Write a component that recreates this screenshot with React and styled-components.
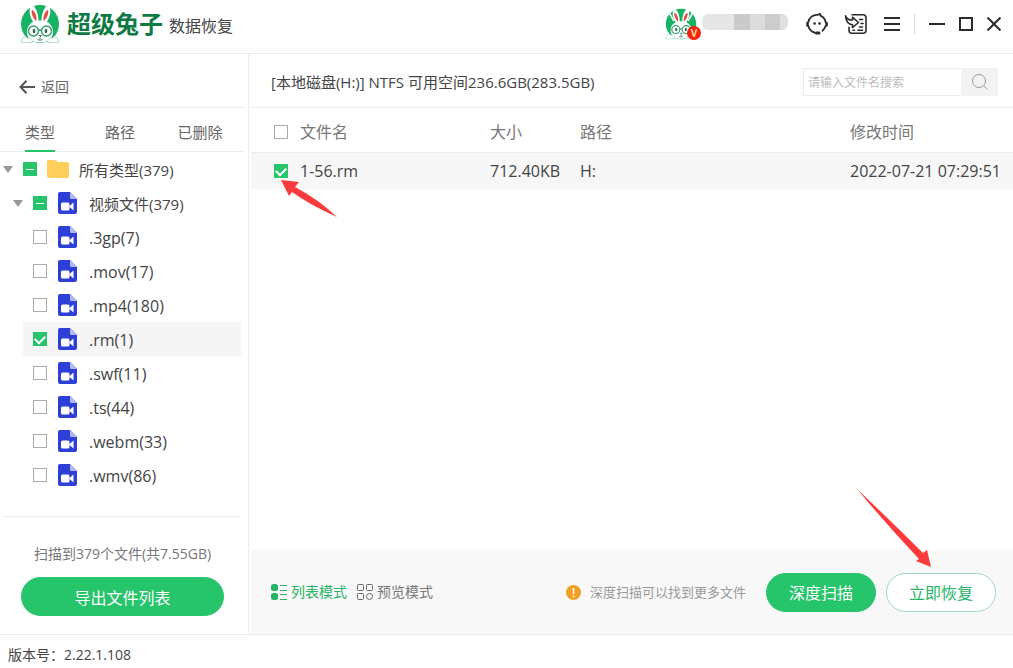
import React, { useEffect, useRef, useState } from "react";
import styled, { createGlobalStyle } from "styled-components";

const fileTypes = [
  { name: ".3gp", count: 7 },
  { name: ".mov", count: 17 },
  { name: ".mp4", count: 180 },
  { name: ".rm", count: 1 },
  { name: ".swf", count: 11 },
  { name: ".ts", count: 44 },
  { name: ".webm", count: 33 },
  { name: ".wmv", count: 86 },
];

const files = [
  {
    name: "1-56.rm",
    size: "712.40KB",
    path: "H:",
    date: "2022-07-21 07:29:51",
  },
];

const Rabbit = ({ size, crown }) => (
  <svg width={size} height={size} viewBox="0 0 40 40" aria-hidden="true">
    <circle cx="20" cy="20" r="19" fill="#16b364" />
    {crown && (
      <path
        d="M12 0l2 9M28 0l-2 9M6 7l5 9M34 7l-5 9"
        stroke="#fff"
        strokeWidth="2"
        fill="none"
      />
    )}
    <path
      d="M16 21C10 16 8 6 11 1.500C14 0 19 8 18.500 19zM24 21C30 16 32 6 29 1.500C26 0 21 8 21.500 19z"
      fill="#fff"
    />
    <path
      d="M16 17C12 13 11 8 12 6C15 7 17 12 16.500 17zM24 17C28 13 29 8 28 6C25 7 23 12 23.500 17z"
      fill="#d9534a"
    />
    <path
      d="M20 16.500C29 16.500 33 22 33 28C33 35 28 38.500 20 38.500S7 35 7 28C7 22 11 16.500 20 16.500z"
      fill="#fff"
    />
    <path
      d="M1.500 38.500C1 34 5 31.500 7.500 34C11 33 13 36 12 38.500zM38.500 38.500C39 34 35 31.500 32.500 34C29 33 27 36 28 38.500z"
      fill="#fff"
      stroke="#7cc9a2"
      strokeWidth="0.6"
    />
    <g fill="none" stroke="#2e9e6b" strokeWidth="1.4">
      <circle cx="13.500" cy="27" r="5" />
      <circle cx="26.500" cy="27" r="5" />
      <path d="M18.500 26.500q1.500-1 3 0" />
    </g>
    <ellipse cx="14" cy="27" rx="1.300" ry="2.200" fill="#256b50" />
    <ellipse cx="26" cy="27" rx="1.300" ry="2.200" fill="#256b50" />
    <path
      d="M18.500 31.500h3l-1.500 1.500v2.500M17.500 35.500q2.500 1.500 5 0"
      fill="none"
      stroke="#33705a"
      strokeWidth="0.9"
    />
  </svg>
);

const ServiceIcon = () => (
  <svg
    width="22"
    height="22"
    viewBox="0 0 22 22"
    fill="none"
    stroke="#2b2b2b"
    strokeWidth="1.800"
    strokeLinecap="round"
    aria-hidden="true"
  >
    <path d="M2.300 9C3.200 4.500 7 1.500 11.500 1.800L14 .9L14.500 2.600C17.300 3.800 19 6 19.600 9" />
    <path d="M2.300 13C3.200 16.500 6 19.300 10 20M19.300 13.500C18.800 15.300 17.800 16.700 16.500 17.700" />
    <path d="M1.500 10v2.500M20.500 10v2.500" strokeWidth="2.600" />
    <path d="M10.500 20h2.500" strokeWidth="3" />
    <path d="M8.500 10.500h.1M13.500 10.500h.1" strokeWidth="2.600" />
  </svg>
);

const FeedbackIcon = () => (
  <svg
    width="24"
    height="24"
    viewBox="0 0 24 24"
    fill="none"
    stroke="#2b2b2b"
    strokeWidth="1.600"
    strokeLinejoin="round"
    strokeLinecap="round"
    aria-hidden="true"
  >
    <path d="M8 2.800h11a3 3 0 0 1 3 3v12.500a3 3 0 0 1-3 3H8a3 3 0 0 1-3-3v-3" />
    <path d="M1.500 3.800C3 7 5 8.300 8.500 8V5.200L14.500 10.500L8.500 15.500v-2.800C4.500 12.500 2 9.500 1.500 3.800z" />
    <path d="M15.500 7.500h3M17 11.500h2M15.500 15h3M9 18.300h1.500M14 18.300h4.500" />
  </svg>
);

const FolderIcon = () => (
  <svg width="22" height="20" viewBox="0 0 22 20" aria-hidden="true">
    <path
      d="M1.500 1h6.500a1.500 1.500 0 0 1 1.200.6L10.500 3h9.500a2 2 0 0 1 2 2v12a2 2 0 0 1-2 2H2a2 2 0 0 1-2-2V2.500A1.500 1.500 0 0 1 1.500 1z"
      fill="#ffce5b"
    />
  </svg>
);

const VideoIcon = () => (
  <svg width="20" height="22" viewBox="0 0 20 22" aria-hidden="true">
    <path
      d="M2 0h10l7 7v13a2 2 0 0 1-2 2H2a2 2 0 0 1-2-2V2a2 2 0 0 1 2-2z"
      fill="#2d3fd6"
    />
    <path d="M12 0l7 7h-5.500A1.500 1.500 0 0 1 12 5.500z" fill="#b4bbf3" />
    <rect x="3" y="10.500" width="8.500" height="8" rx="1.500" fill="#fff" />
    <path d="M11 14.500l4.500-4v8z" fill="#fff" />
  </svg>
);

const ListIcon = () => (
  <svg width="16" height="16" viewBox="0 0 16 16" aria-hidden="true">
    <rect x="0" y="0" width="7" height="7" rx="2.500" fill="#26b565" />
    <rect x="0" y="9" width="7" height="7" rx="2.500" fill="#26b565" />
    <path d="M9 1.500h7M9 6.500h7M9 10.500h7M9 15.500h7" stroke="#26b565" />
  </svg>
);

const GridIcon = () => (
  <svg
    width="16"
    height="16"
    viewBox="0 0 16 16"
    fill="none"
    stroke="#666"
    aria-hidden="true"
  >
    <rect x="0.500" y="0.500" width="6" height="6" rx="1" />
    <rect x="9.500" y="0.500" width="6" height="6" rx="1" />
    <rect x="0.500" y="9.500" width="6" height="6" rx="1" />
    <circle cx="12.500" cy="12.500" r="3" />
  </svg>
);

const CheckBox = ({ partial, ...props }) => {
  const ref = useRef(null);
  useEffect(() => {
    ref.current.indeterminate = !!partial;
  }, [partial]);
  return <Check ref={ref} type="checkbox" {...props} />;
};

const App = () => {
  const [checked, setChecked] = useState({ ".rm": true });
  const [picked, setPicked] = useState({ "1-56.rm": true });

  return (
    <Window>
      <GlobalStyle />
      <Header>
        <Rabbit size={40} />
        <Brand>超级兔子</Brand>
        <Product>数据恢复</Product>
        <Spacer />
        <Avatar>
          <Rabbit size={32} crown />
          <Vip>V</Vip>
        </Avatar>
        <UserName>
          <Block $color="#e6e6e6" $width={32} />
          <Block $color="#cacaca" $width={16} />
          <Block $color="#dcdcdc" $width={15} />
          <Block $color="#cccccc" $width={15} />
          <Block $color="#e0e0e0" $width={8} />
        </UserName>
        <Tools>
          <IconButton aria-label="客服">
            <ServiceIcon />
          </IconButton>
          <IconButton aria-label="反馈">
            <FeedbackIcon />
          </IconButton>
          <IconButton aria-label="菜单">
            <svg width="16" height="16" viewBox="0 0 16 16">
              <path
                d="M0 2h16M0 8h16M0 14h16"
                stroke="#2b2b2b"
                strokeWidth="2"
              />
            </svg>
          </IconButton>
        </Tools>
        <WindowButtons>
          <IconButton aria-label="最小化">
            <svg width="16" height="16" viewBox="0 0 16 16">
              <path d="M0 8h16" stroke="#2b2b2b" strokeWidth="2" />
            </svg>
          </IconButton>
          <IconButton aria-label="最大化">
            <svg width="14" height="14" viewBox="0 0 14 14">
              <path
                d="M1 1h12v12H1z"
                fill="none"
                stroke="#2b2b2b"
                strokeWidth="2"
              />
            </svg>
          </IconButton>
          <IconButton aria-label="关闭">
            <svg width="14" height="14" viewBox="0 0 14 14">
              <path
                d="M.5 .5l13 13M13.500 .5l-13 13"
                stroke="#2b2b2b"
                strokeWidth="2"
              />
            </svg>
          </IconButton>
        </WindowButtons>
      </Header>

      <Body>
        <Sidebar>
          <Back>
            <svg width="16" height="14" viewBox="0 0 16 14" aria-hidden="true">
              <path
                d="M7.500 .8L1.500 7l6 6.200M1.500 7H16"
                fill="none"
                stroke="#555"
                strokeWidth="2"
              />
            </svg>
            返回
          </Back>
          <Tabs>
            <Tab $active>类型</Tab>
            <Tab>路径</Tab>
            <Tab>已删除</Tab>
          </Tabs>
          <Tree>
            <TreeRow $level={0}>
              <Caret />
              <CheckBox partial />
              <FolderIcon />
              <TreeText>所有类型(379)</TreeText>
            </TreeRow>
            <TreeRow $level={1}>
              <Caret />
              <CheckBox partial />
              <VideoIcon />
              <TreeText>视频文件(379)</TreeText>
            </TreeRow>
            {fileTypes.map(({ name, count }) => (
              <TreeRow key={name} $level={2} $active={name === ".rm"}>
                <CheckBox
                  checked={!!checked[name]}
                  onChange={(e) =>
                    setChecked({ ...checked, [name]: e.target.checked })
                  }
                />
                <VideoIcon />
                <TreeText $leaf>
                  {name}({count})
                </TreeText>
              </TreeRow>
            ))}
          </Tree>
          <Summary>
            <Found>扫描到379个文件(共7.55GB)</Found>
            <Button $primary>导出文件列表</Button>
          </Summary>
        </Sidebar>

        <Main>
          <InfoBar>
            <Disk>[本地磁盘(H:)] NTFS 可用空间236.6GB(283.5GB)</Disk>
            <Search>
              <SearchInput
                aria-label="搜索文件名"
                placeholder="请输入文件名搜索"
              />
              <SearchButton aria-label="搜索">
                <svg width="18" height="18" viewBox="0 0 18 18">
                  <g fill="none" stroke="#999">
                    <circle cx="8" cy="8" r="6.500" />
                    <path d="M13 13l3.500 3.500" />
                  </g>
                </svg>
              </SearchButton>
            </Search>
          </InfoBar>
          <Table>
            <thead>
              <tr>
                <HeadCell $width={49}>
                  <CheckBox aria-label="全选" />
                </HeadCell>
                <HeadCell $width={190}>文件名</HeadCell>
                <HeadCell $width={90}>大小</HeadCell>
                <HeadCell>路径</HeadCell>
                <HeadCell $width={163}>修改时间</HeadCell>
              </tr>
            </thead>
            <tbody>
              {files.map((file) => (
                <tr key={file.name}>
                  <Cell>
                    <Pointed>
                      <CheckBox
                        aria-label={file.name}
                        checked={!!picked[file.name]}
                        onChange={(e) =>
                          setPicked({
                            ...picked,
                            [file.name]: e.target.checked,
                          })
                        }
                      />
                      <RowArrow viewBox="0 0 58 40" aria-hidden="true">
                        <path d="M1 1L19 3L15 8Q38 20 57 38Q30 26 12 13L9 17z" />
                      </RowArrow>
                    </Pointed>
                  </Cell>
                  <Cell>{file.name}</Cell>
                  <Cell>{file.size}</Cell>
                  <Cell>{file.path}</Cell>
                  <Cell>{file.date}</Cell>
                </tr>
              ))}
            </tbody>
          </Table>
          <ActionBar>
            <ModeButton $active>
              <ListIcon />
              列表模式
            </ModeButton>
            <ModeButton>
              <GridIcon />
              预览模式
            </ModeButton>
            <Spacer />
            <Hint>
              <svg
                width="15"
                height="15"
                viewBox="0 0 15 15"
                aria-hidden="true"
              >
                <circle cx="7.500" cy="7.500" r="7.500" fill="#f0a020" />
                <path
                  d="M7.500 3v6M7.500 10.500v1.700"
                  stroke="#fff"
                  strokeWidth="1.600"
                />
              </svg>
              深度扫描可以找到更多文件
            </Hint>
            <Actions>
              <Button $primary>深度扫描</Button>
              <Pointed>
                <Button>立即恢复</Button>
                <ButtonArrow viewBox="0 0 78 82" aria-hidden="true">
                  <path d="M1 1Q38 36 67 65L71 62L75 79L60 73L63 71Q30 36 1 1z" />
                </ButtonArrow>
              </Pointed>
            </Actions>
          </ActionBar>
        </Main>
      </Body>

      <Footer>版本号：2.22.1.108</Footer>
    </Window>
  );
};

export default App;

const GlobalStyle = createGlobalStyle`
  * {
    box-sizing: border-box;
  }
  body {
    margin: 0;
    background: #fff;
    color: #444;
    font-family: "Open Sans", "Noto Sans CJK SC", sans-serif;
    font-size: 15px;
    line-height: 20px;
  }
  button, input {
    font: inherit;
  }
  button {
    padding: 0;
    border: 0;
    background: none;
    cursor: pointer;
  }
  svg {
    display: block;
    flex-shrink: 0;
  }
`;

const Window = styled.div`
  display: flex;
  flex-direction: column;
  min-height: 100vh;
`;

const Header = styled.header`
  display: flex;
  align-items: center;
  height: 54px;
  padding: 0 12px 6px 20px;
  border-bottom: 1px solid #ececec;
`;

const Brand = styled.strong`
  margin-left: 7px;
  color: #0d7a43;
  font-size: 24px;
  font-weight: 700;
`;

const Product = styled.span`
  margin-left: 6px;
  padding-top: 4px;
  font-size: 16px;
`;

const Spacer = styled.div`
  flex: 1;
`;

const Avatar = styled.div`
  position: relative;
`;

const Vip = styled.span`
  position: absolute;
  right: -4px;
  bottom: 0;
  width: 14px;
  height: 14px;
  border-radius: 50%;
  background: #f5230f;
  color: #ffd9a0;
  font-size: 10px;
  font-weight: 700;
  line-height: 14px;
  text-align: center;
`;

const UserName = styled.div`
  display: flex;
  margin-left: 5px;
  padding-bottom: 4px;
`;

const Block = styled.span`
  width: ${(props) => props.$width}px;
  height: 16px;
  background: ${(props) => props.$color};

  &:first-child {
    border-radius: 6px 0 0 6px;
  }
  &:last-child {
    border-radius: 0 6px 6px 0;
  }
`;

const IconButton = styled.button`
  display: flex;
  align-items: center;
`;

const Tools = styled.div`
  display: flex;
  align-items: center;
  gap: 16px;
  height: 20px;
  margin-left: 18px;
  padding-right: 14px;
  border-right: 1px solid #ddd;
`;

const WindowButtons = styled.div`
  display: flex;
  gap: 14px;
  margin-left: 14px;
`;

const Body = styled.div`
  display: flex;
  flex: 1;
`;

const Sidebar = styled.aside`
  display: flex;
  flex-direction: column;
  width: 249px;
  flex-shrink: 0;
  padding-right: 4px;
  border-right: 1px solid #ececec;
`;

const Back = styled.button`
  display: flex;
  align-items: center;
  gap: 6px;
  height: 54px;
  padding: 12px 0 0 19px;
  border-bottom: 1px solid #ececec;
  color: #666;
  font-size: 14px;
`;

const Tabs = styled.nav`
  display: grid;
  grid-template-columns: repeat(3, 80px);
  justify-items: center;
  height: 44px;
  border-bottom: 1px solid #ececec;
`;

const Tab = styled.button`
  height: 44px;
  padding-top: 6px;
  border-bottom: 2px solid ${(props) => (props.$active ? "#26c46b" : "transparent")};
  color: #666;
  white-space: nowrap;
`;

const Tree = styled.div`
  display: flex;
  flex-direction: column;
`;

const TreeRow = styled.label`
  display: flex;
  align-items: center;
  height: 34px;
  margin-left: ${(props) => (props.$level === 2 ? 23 : 0)}px;
  margin-right: 3px;
  padding-left: ${(props) => (props.$level === 1 ? 13 : props.$level === 2 ? 10 : 3)}px;
  background: ${(props) => (props.$active ? "#f5f5f5" : "none")};

  svg {
    margin: 0 ${(props) => (props.$level === 0 ? 10 : 11)}px;
  }
`;

const TreeText = styled.span`
  padding-top: 2px;
  font-size: ${(props) => (props.$leaf ? 16 : 15)}px;
`;

const Caret = styled.i`
  margin-right: 10px;
  border: 5px solid transparent;
  border-top: 7px solid #999;
  border-bottom: 0;
`;

const Check = styled.input`
  appearance: none;
  display: grid;
  place-content: center;
  flex-shrink: 0;
  width: 14px;
  height: 14px;
  margin: 0;
  border: 1px solid #aaa;
  background: #fff;

  &:checked,
  &:indeterminate {
    border-color: #26c46b;
    background: #26c46b;
  }
  &:checked::after {
    content: "";
    width: 8px;
    height: 5px;
    margin-bottom: 2px;
    border: solid #fff;
    border-width: 0 0 2px 2px;
    transform: rotate(-45deg);
  }
  &:indeterminate::after {
    content: "";
    width: 8px;
    height: 1px;
    background: #fff;
  }
`;

const Summary = styled.div`
  display: flex;
  flex-direction: column;
  gap: 13px;
  margin: auto 3px 0 4px;
  padding: 27px 17px 18px;
  border-top: 1px solid #ececec;
`;

const Found = styled.div`
  color: #777;
  font-size: 14px;
  text-align: center;
  white-space: nowrap;
`;

const Button = styled.button`
  min-width: 110px;
  height: 39px;
  padding-top: 2px;
  border: 1px solid ${(props) => (props.$primary ? "#26c46b" : "#9fd8bd")};
  border-radius: 20px;
  background: ${(props) => (props.$primary ? "#26c46b" : "#fff")};
  color: ${(props) => (props.$primary ? "#fff" : "#26b565")};
  font-size: 16px;
`;

const Main = styled.main`
  display: flex;
  flex-direction: column;
  flex: 1;
  min-width: 0;
  padding-left: 2px;
`;

const InfoBar = styled.div`
  display: flex;
  align-items: center;
  justify-content: space-between;
  height: 54px;
  padding: 2px 15px 0 20px;
  border-bottom: 1px solid #ececec;
`;

const Disk = styled.div`
  white-space: nowrap;
`;

const Search = styled.div`
  display: flex;
  width: 195px;
  height: 28px;
`;

const SearchInput = styled.input`
  flex: 1;
  min-width: 0;
  padding: 2px 4px 0;
  border: 1px solid #ececec;
  border-right: 0;
  outline: none;
  font-size: 12px;

  &::placeholder {
    color: #bbb;
  }
`;

const SearchButton = styled.button`
  display: flex;
  align-items: center;
  justify-content: center;
  width: 37px;
  background: #f2f2f2;
`;

const Table = styled.table`
  width: 100%;
  margin-bottom: auto;
  table-layout: fixed;
  border-collapse: separate;
  border-spacing: 0;
  text-align: left;
`;

const HeadCell = styled.th`
  width: ${(props) => (props.$width ? props.$width + "px" : "auto")};
  height: 45px;
  padding: 4px 0 0;
  border-bottom: 1px solid #ececec;
  color: #777;
  font-size: 16px;
  font-weight: 400;

  &:first-child {
    padding-left: 23px;
  }
`;

const Cell = styled.td`
  height: 36px;
  padding: 0;
  background: #f7f7f7;
  font-size: 16px;
  white-space: nowrap;

  &:first-child {
    padding-left: 23px;
  }
`;

const Pointed = styled.div`
  position: relative;
`;

/* red pointers lie over the page, tip on the control */
const RowArrow = styled.svg`
  position: absolute;
  top: 15px;
  left: 6px;
  width: 58px;
  height: 40px;
  fill: #fb3b3b;
  pointer-events: none;
`;

const ButtonArrow = styled.svg`
  position: absolute;
  bottom: 42px;
  right: 62px;
  width: 78px;
  height: 82px;
  fill: #fb3b3b;
  pointer-events: none;
`;

const ActionBar = styled.div`
  display: flex;
  align-items: center;
  height: 84px;
  padding: 0 17px 0 20px;
  background: #f8f8f8;
`;

const ModeButton = styled.button`
  display: flex;
  align-items: center;
  gap: 4px;
  margin-right: 10px;
  color: ${(props) => (props.$active ? "#26b565" : "#777")};
  font-size: 14px;
  white-space: nowrap;
`;

const Hint = styled.div`
  display: flex;
  align-items: center;
  gap: 9px;
  color: #999;
  font-size: 13px;
  white-space: nowrap;
`;

const Actions = styled.div`
  display: flex;
  gap: 10px;
  margin-left: 20px;
`;

const Footer = styled.footer`
  padding: 10px 8px 3px;
  border-top: 1px solid #ececec;
  font-size: 14px;
`;
